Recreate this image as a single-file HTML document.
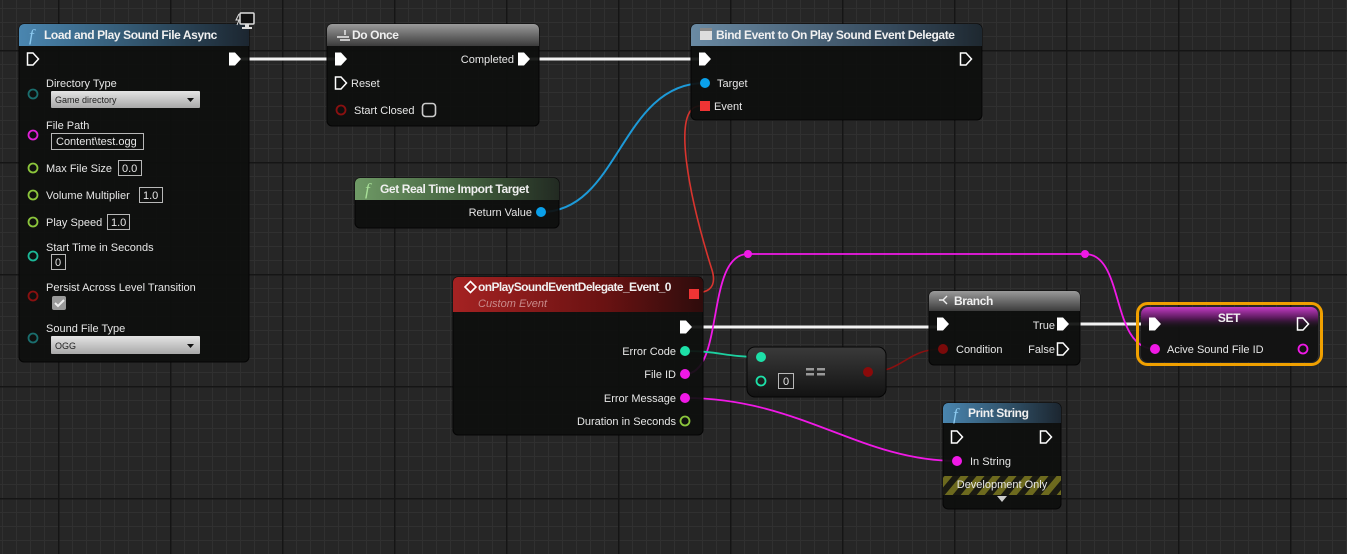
<!DOCTYPE html>
<html><head><meta charset="utf-8"><style>
html,body{margin:0;padding:0;width:1347px;height:554px;overflow:hidden;background:#262626;}
body{background-color:#262626;background-image:
linear-gradient(to right,#151515 0,#151515 1.5px,transparent 1.5px),
linear-gradient(to bottom,#151515 0,#151515 1.5px,transparent 1.5px),
linear-gradient(to right,#303030 0,#303030 1px,transparent 1px),
linear-gradient(to bottom,#303030 0,#303030 1px,transparent 1px);
background-size:112px 112px,112px 112px,14px 14px,14px 14px;
background-position:58px 0,0 50px,2px 0,0 8px;}
svg{position:absolute;left:0;top:0;}
text{font-family:"Liberation Sans",sans-serif;font-size:11px;fill:#e6e6e6;}
.t{font-size:12px;font-weight:bold;fill:#f0f0f0;letter-spacing:-0.4px;}
.r{text-anchor:end;}
.f{font-family:"Liberation Serif",serif;font-style:italic;font-size:17px;fill:#8ccaf0;}
.body{fill:rgba(14,15,14,0.93);stroke:#050505;stroke-width:1;}
.box{fill:none;stroke:#b8b8b8;stroke-width:1;}
</style></head><body>
<svg width="1347" height="554" viewBox="0 0 1347 554">
<defs>
<linearGradient id="gb" x1="0" y1="0" x2="1" y2="0"><stop offset="0" stop-color="#4a86b0"/><stop offset="0.6" stop-color="#2e4d63"/><stop offset="1" stop-color="#1c2630"/></linearGradient>
<linearGradient id="gg" x1="0" y1="0" x2="1" y2="0"><stop offset="0" stop-color="#6f9a66"/><stop offset="0.6" stop-color="#3e5a3a"/><stop offset="1" stop-color="#222a22"/></linearGradient>
<linearGradient id="gy" x1="0" y1="0" x2="0" y2="1"><stop offset="0" stop-color="#9a9a9a"/><stop offset="1" stop-color="#3c3c3c"/></linearGradient>
<linearGradient id="gbb" x1="0" y1="0" x2="1" y2="0"><stop offset="0" stop-color="#6a8aa3"/><stop offset="0.7" stop-color="#34485a"/><stop offset="1" stop-color="#1e2830"/></linearGradient>
<linearGradient id="gr" x1="0" y1="0" x2="1" y2="0"><stop offset="0" stop-color="#a52222"/><stop offset="0.6" stop-color="#6a1212"/><stop offset="1" stop-color="#2e0c0c"/></linearGradient>
<linearGradient id="gp" x1="0" y1="0" x2="0" y2="1"><stop offset="0" stop-color="#c23cc4"/><stop offset="0.5" stop-color="#5a1a5c"/><stop offset="1" stop-color="#141414" stop-opacity="0"/></linearGradient>
<linearGradient id="gd" x1="0" y1="0" x2="0" y2="1"><stop offset="0" stop-color="#e4e4e4"/><stop offset="1" stop-color="#a8a8a8"/></linearGradient>
<linearGradient id="ge" x1="0" y1="0" x2="0" y2="1"><stop offset="0" stop-color="#3a3a3a"/><stop offset="1" stop-color="#121212"/></linearGradient>
<pattern id="st" width="16" height="20" patternUnits="userSpaceOnUse" patternTransform="skewX(-40)"><rect width="16" height="20" fill="#1a1a12"/><rect width="8" height="20" fill="#6d6a1e"/></pattern>
<path id="ef" d="M-6,-6.5 h6 l6,6.5 l-6,6.5 h-6 z" fill="#fff"/>
<path id="eo" d="M-5.5,-6 h5.5 l5.5,6 l-5.5,6 h-5.5 z" fill="none" stroke="#fff" stroke-width="1.5"/>
</defs>
<!-- wires -->
<g fill="none" stroke-linecap="round">
<path d="M236,59 H336" stroke="#f2f2f2" stroke-width="3"/>
<path d="M530,59 H700" stroke="#f2f2f2" stroke-width="3"/>
<path d="M691,327 H938" stroke="#f2f2f2" stroke-width="3"/>
<path d="M1068,324 H1150" stroke="#f2f2f2" stroke-width="3"/>
<path d="M541,212 C620,212 620,83 705,83" stroke="#1d9ad8" stroke-width="2"/>
<path d="M700,106 C670,106 690,200 712,270 C718,290 705,293 694,293" stroke="#d8342e" stroke-width="1.6"/>
<path d="M685,374 C725,374 705,254 748,254 L1085,254 C1125,254 1110,349 1155,349" stroke="#f019e6" stroke-width="1.8"/>
<path d="M685,351 C720,351 725,357 761,357" stroke="#1dd0a0" stroke-width="1.8"/>
<path d="M868,372 C905,372 905,349 943,349" stroke="#8a1010" stroke-width="1.6"/>
<path d="M685,398 C800,398 860,461 957,461" stroke="#f019e6" stroke-width="1.8"/>
</g>
<circle cx="748" cy="254" r="4" fill="#f019e6"/><circle cx="1085" cy="254" r="4" fill="#f019e6"/>

<!-- Node 1 -->
<rect class="body" x="19" y="24" width="230" height="338" rx="5"/>
<path d="M24,24 H244 a5,5 0 0 1 5,5 V46 H19 V29 a5,5 0 0 1 5,-5z" fill="url(#gb)"/>
<text class="f" x="29" y="41">f</text><text class="t" x="44" y="39">Load and Play Sound File Async</text>
<g transform="translate(236,12)"><rect x="4" y="1" width="14" height="11" rx="1" fill="#111" stroke="#ddd" stroke-width="1.5"/><rect x="9" y="12" width="4" height="3" fill="#ddd"/><rect x="6" y="15" width="10" height="2" fill="#ddd"/><path d="M3,2 L0,8 L3,8 L1,13" stroke="#ddd" fill="none"/></g>
<use href="#eo" x="33" y="59"/><use href="#ef" x="235" y="59"/>
<g fill="none" stroke-width="1.8">
<circle cx="33" cy="94" r="4.5" stroke="#1a6e6e"/><circle cx="33" cy="135" r="4.5" stroke="#e020d8"/>
<circle cx="33" cy="168" r="4.5" stroke="#8cc63c"/><circle cx="33" cy="195" r="4.5" stroke="#8cc63c"/>
<circle cx="33" cy="222" r="4.5" stroke="#8cc63c"/><circle cx="33" cy="256" r="4.5" stroke="#1cb898"/>
<circle cx="33" cy="296" r="4.5" stroke="#8a1010"/><circle cx="33" cy="338" r="4.5" stroke="#1a6e6e"/>
</g>
<text x="46" y="87">Directory Type</text>
<rect x="51" y="91" width="149" height="17" rx="1" fill="url(#gd)"/><text x="55" y="103" style="font-size:9px;fill:#222">Game directory</text><path d="M187,98 h7 l-3.5,4z" fill="#111"/>
<text x="46" y="129">File Path</text>
<rect class="box" x="51.5" y="133.5" width="92" height="16"/><text x="56" y="145">Content\test.ogg</text>
<text x="46" y="172">Max File Size</text><rect class="box" x="118.5" y="160.5" width="23" height="15"/><text x="122" y="172">0.0</text>
<text x="46" y="199">Volume Multiplier</text><rect class="box" x="139.5" y="187.5" width="23" height="15"/><text x="143" y="199">1.0</text>
<text x="46" y="226">Play Speed</text><rect class="box" x="107.5" y="214.5" width="22" height="15"/><text x="111" y="226">1.0</text>
<text x="46" y="251">Start Time in Seconds</text><rect class="box" x="51.5" y="254.5" width="14" height="15"/><text x="55" y="266">0</text>
<text x="46" y="291">Persist Across Level Transition</text><rect x="52" y="296" width="14" height="14" rx="2" fill="#9a9a9a"/><path d="M55,303 l3,3 l6,-6" stroke="#eee" stroke-width="2" fill="none"/>
<text x="46" y="332">Sound File Type</text>
<rect x="51" y="336" width="149" height="18" rx="1" fill="url(#gd)"/><text x="55" y="349" style="font-size:9px;fill:#222">OGG</text><path d="M187,344 h7 l-3.5,4z" fill="#111"/>

<!-- Do Once -->
<rect class="body" x="327" y="24" width="212" height="102" rx="5"/>
<path d="M332,24 H534 a5,5 0 0 1 5,5 V46 H327 V29 a5,5 0 0 1 5,-5z" fill="url(#gy)"/>
<path d="M337,37 h12 M340,40 h10 M345,30 v5" stroke="#eee" stroke-width="1.4"/>
<text class="t" x="352" y="39">Do Once</text>
<use href="#ef" x="341" y="59"/><text class="r" x="514" y="63">Completed</text><use href="#ef" x="524" y="59"/>
<use href="#eo" x="341" y="83"/><text x="351" y="87">Reset</text>
<circle cx="341" cy="110" r="4.5" fill="none" stroke="#8a1010" stroke-width="1.8"/><text x="354" y="114">Start Closed</text>
<rect x="422.5" y="103.5" width="13" height="13" rx="3" fill="none" stroke="#ccc" stroke-width="1.6"/>

<!-- Bind Event -->
<rect class="body" x="691" y="24" width="291" height="96" rx="5"/>
<path d="M696,24 H977 a5,5 0 0 1 5,5 V46 H691 V29 a5,5 0 0 1 5,-5z" fill="url(#gbb)"/>
<rect x="700" y="28" width="12" height="12" fill="#ddd"/><rect x="700" y="28" width="12" height="3" fill="#888"/>
<text class="t" x="716" y="39">Bind Event to On Play Sound Event Delegate</text>
<use href="#ef" x="705" y="59"/><use href="#eo" x="966" y="59"/>
<circle cx="705" cy="83" r="5" fill="#0aa0ea"/><text x="717" y="87">Target</text>
<rect x="700" y="101" width="10" height="10" fill="#f03434"/><text x="714" y="110">Event</text>

<!-- Get Real Time -->
<rect class="body" x="355" y="178" width="204" height="50" rx="5"/>
<path d="M360,178 H554 a5,5 0 0 1 5,5 V200 H355 V183 a5,5 0 0 1 5,-5z" fill="url(#gg)"/>
<text class="f" x="365" y="195" style="fill:#a8e098">f</text><text class="t" x="380" y="193">Get Real Time Import Target</text>
<text class="r" x="532" y="216">Return Value</text><circle cx="541" cy="212" r="5" fill="#0aa0ea"/>

<!-- Custom event -->
<rect class="body" x="453" y="277" width="250" height="158" rx="5"/>
<path d="M458,277 H698 a5,5 0 0 1 5,5 V312 H453 V282 a5,5 0 0 1 5,-5z" fill="url(#gr)"/>
<path d="M465,287 l5.5,-5.5 l5.5,5.5 l-5.5,5.5z" fill="none" stroke="#fff" stroke-width="1.6"/>
<text class="t" x="478" y="291" style="letter-spacing:-0.6px">onPlaySoundEventDelegate_Event_0</text>
<text x="478" y="307" style="font-style:italic;fill:#c88a8a">Custom Event</text>
<rect x="689" y="289" width="10" height="10" fill="#f03434"/>
<use href="#ef" x="686" y="327"/>
<text class="r" x="676" y="355">Error Code</text><circle cx="685" cy="351" r="5" fill="#1de0a8"/>
<text class="r" x="676" y="378">File ID</text><circle cx="685" cy="374" r="5" fill="#f019e6"/>
<text class="r" x="676" y="402">Error Message</text><circle cx="685" cy="398" r="5" fill="#f019e6"/>
<text class="r" x="676" y="425">Duration in Seconds</text><circle cx="685" cy="421" r="4.5" fill="none" stroke="#8cc63c" stroke-width="1.8"/>

<!-- == -->
<rect x="747" y="347" width="139" height="50" rx="8" fill="url(#ge)" stroke="#050505"/>
<circle cx="761" cy="357" r="5" fill="#1de0a8"/>
<circle cx="761" cy="381" r="4.5" fill="none" stroke="#1de0a8" stroke-width="1.8"/>
<rect class="box" x="778.5" y="373.5" width="15" height="15"/><text x="783" y="385">0</text>
<rect x="806" y="368" width="8" height="2.5" fill="#999"/><rect x="817" y="368" width="8" height="2.5" fill="#999"/>
<rect x="806" y="373" width="8" height="2.5" fill="#999"/><rect x="817" y="373" width="8" height="2.5" fill="#999"/>
<circle cx="868" cy="372" r="5" fill="#8a0a0a"/>

<!-- Branch -->
<rect class="body" x="929" y="291" width="151" height="74" rx="5"/>
<path d="M934,291 H1075 a5,5 0 0 1 5,5 V311 H929 V296 a5,5 0 0 1 5,-5z" fill="url(#gy)"/>
<path d="M947,296 l-4,4 l4,4 M943,300 h-4" stroke="#eee" stroke-width="1.4" fill="none"/>
<text class="t" x="954" y="305">Branch</text>
<use href="#ef" x="943" y="324"/><text class="r" x="1055" y="329">True</text><use href="#ef" x="1063" y="324"/>
<circle cx="943" cy="349" r="5" fill="#7a0a0a"/><text x="956" y="353">Condition</text>
<text class="r" x="1055" y="353">False</text><use href="#eo" x="1063" y="349"/>

<!-- SET -->
<rect x="1137.5" y="303.5" width="184" height="61" rx="10" fill="none" stroke="#f0a000" stroke-width="3"/>
<rect x="1141" y="307" width="177" height="55" rx="7" fill="rgba(18,18,18,0.95)"/>
<rect x="1141" y="307" width="177" height="22" rx="7" fill="url(#gp)"/>
<text class="t" x="1229" y="322" style="text-anchor:middle">SET</text>
<use href="#ef" x="1155" y="324"/><use href="#eo" x="1303" y="324"/>
<circle cx="1155" cy="349" r="5" fill="#f019e6"/><text x="1167" y="353">Acive Sound File ID</text>
<circle cx="1303" cy="349" r="4.5" fill="none" stroke="#f019e6" stroke-width="1.8"/>

<!-- Print String -->
<rect class="body" x="943" y="403" width="118" height="106" rx="5"/>
<path d="M948,403 H1056 a5,5 0 0 1 5,5 V423 H943 V408 a5,5 0 0 1 5,-5z" fill="url(#gb)"/>
<text class="f" x="953" y="420">f</text><text class="t" x="968" y="417">Print String</text>
<use href="#eo" x="957" y="437"/><use href="#eo" x="1046" y="437"/>
<circle cx="957" cy="461" r="5" fill="#f019e6"/><text x="970" y="465">In String</text>
<rect x="943" y="476" width="118" height="19" fill="url(#st)"/>
<text x="1002" y="488" style="text-anchor:middle">Development Only</text>
<path d="M997,496 h10 l-5,6z" fill="#ccc"/>
</svg>
</body></html>
